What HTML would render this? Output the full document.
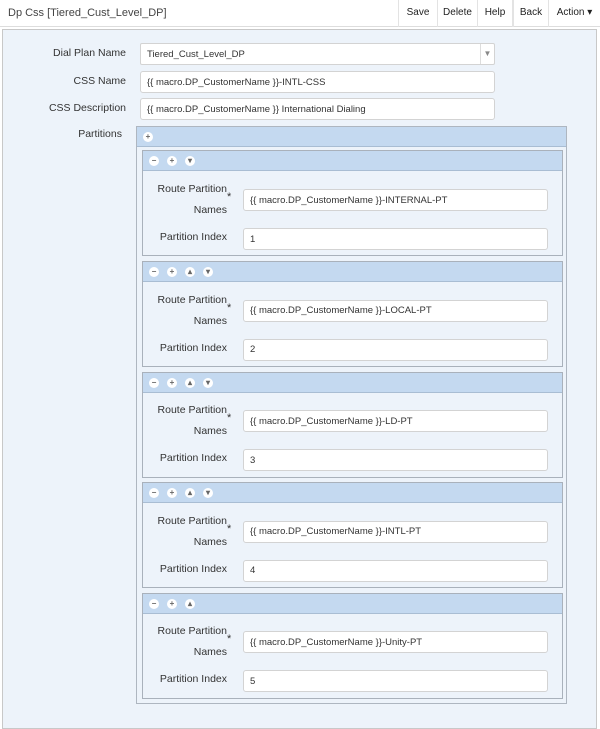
<!DOCTYPE html>
<html><head><style>
*{box-sizing:border-box;margin:0;padding:0}
body{width:600px;height:720px;background:#fff;font-family:"Liberation Sans",sans-serif;font-size:10px;color:#333;position:relative;overflow:hidden}
.top{position:absolute;left:0;top:0;width:600px;height:27px;border-bottom:1px solid #ddd;background:#fff}
.title{position:absolute;left:8px;top:7px;font-size:11px;color:#444}
.btn{position:absolute;top:0;height:27px;border-left:1px solid #e3e3e3;font-size:10px;line-height:26px;text-align:center;color:#222}
.panel{position:absolute;left:2px;top:29px;width:595px;height:700px;background:#edf3fa;border:1px solid #c8c8c8}
.lbl{position:absolute;text-align:right;font-size:10.5px;color:#333}
.inp{position:absolute;background:#fff;border:1px solid #d3d3d3;border-radius:3px;height:22px;font-size:9.5px;padding-left:6px;color:#333;display:flex;align-items:center}
.outer{position:absolute;left:136px;top:126px;width:431px;height:578px;border:1px solid #aeb6c0;background:#edf3fa}
.hdr{position:absolute;left:0;top:0;right:0;height:20px;background:#c4d9f0;border-bottom:1px solid #a9bdd3}
.blk{position:absolute;left:5px;width:421px;height:106px;border:1px solid #a9b1bb;background:#edf3fa}
.ic{position:absolute;top:5px;width:10px;height:10px;border-radius:50%;background:#fff;font-size:8px;line-height:10px;text-align:center;color:#666;font-weight:bold}
</style></head><body>
<div class="top">
<div class="title">Dp Css [Tiered_Cust_Level_DP]</div>
<div class="btn" style="left:398px;width:39px">Save</div>
<div class="btn" style="left:437px;width:40px">Delete</div>
<div class="btn" style="left:477px;width:35px">Help</div>
<div class="btn" style="left:512px;width:36px;border-left:2px solid #e3e3e3">Back</div>
<div class="btn" style="left:548px;width:52px">Action ▾</div>
</div>
<div class="panel"></div>
<div class="lbl" style="left:20px;width:106px;top:47px">Dial Plan Name</div>
<div class="inp" style="left:140px;top:43px;width:355px;border-radius:2px">Tiered_Cust_Level_DP<span style="position:absolute;right:0;top:0;width:14px;height:20px;line-height:20px;border-left:1px solid #ddd;color:#888;font-size:8px;text-align:center">▼</span></div>
<div class="lbl" style="left:20px;width:106px;top:75px">CSS Name</div>
<div class="inp" style="left:140px;top:71px;width:355px">{{ macro.DP_CustomerName }}-INTL-CSS</div>
<div class="lbl" style="left:20px;width:106px;top:102px">CSS Description</div>
<div class="inp" style="left:140px;top:98px;width:355px">{{ macro.DP_CustomerName }} International Dialing</div>
<div class="lbl" style="left:20px;width:102px;top:128px">Partitions</div>
<div class="outer">
<div class="hdr"><div class="ic" style="left:6px">+</div></div>
<div class="blk" style="top:23px"><div class="hdr"><div class="ic" style="left:6px">−</div><div class="ic" style="left:24px">+</div><div class="ic" style="left:42px">▾</div></div></div>
<div class="blk" style="top:134px"><div class="hdr"><div class="ic" style="left:6px">−</div><div class="ic" style="left:24px">+</div><div class="ic" style="left:42px">▴</div><div class="ic" style="left:60px">▾</div></div></div>
<div class="blk" style="top:244.5px"><div class="hdr"><div class="ic" style="left:6px">−</div><div class="ic" style="left:24px">+</div><div class="ic" style="left:42px">▴</div><div class="ic" style="left:60px">▾</div></div></div>
<div class="blk" style="top:355px"><div class="hdr"><div class="ic" style="left:6px">−</div><div class="ic" style="left:24px">+</div><div class="ic" style="left:42px">▴</div><div class="ic" style="left:60px">▾</div></div></div>
<div class="blk" style="top:465.5px"><div class="hdr"><div class="ic" style="left:6px">−</div><div class="ic" style="left:24px">+</div><div class="ic" style="left:42px">▴</div></div></div>
</div>
<div id="rows"></div>
<script>
var names=["INTERNAL-PT","LOCAL-PT","LD-PT","INTL-PT","Unity-PT"],h="";
for(var i=0;i<5;i++){var t=151+i*110.5;
h+='<div class="lbl" style="left:140px;width:87px;top:'+(t+28)+'px;line-height:21px">Route Partition<br>Names</div>';
h+='<div class="lbl" style="left:227px;top:'+(t+40)+'px;font-size:11px">*</div>';
h+='<div class="inp" style="left:243px;top:'+(t+38)+'px;width:305px">{{ macro.DP_CustomerName }}-'+names[i]+'</div>';
h+='<div class="lbl" style="left:140px;width:87px;top:'+(t+80)+'px">Partition Index</div>';
h+='<div class="inp" style="left:243px;top:'+(t+77)+'px;width:305px">'+(i+1)+'</div>';}
document.getElementById("rows").innerHTML=h;
</script>
</body></html>
